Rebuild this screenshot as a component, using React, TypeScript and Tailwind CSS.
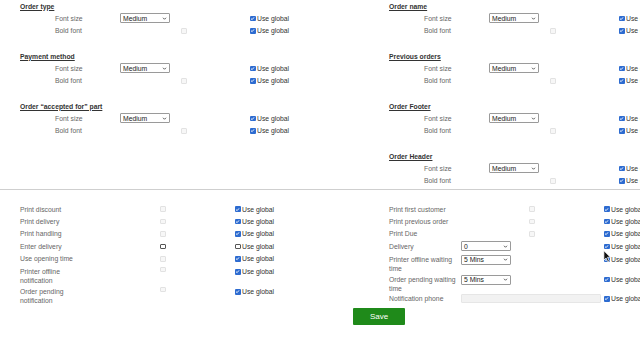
import React from "react";

type Top = { title: string };

const TOP_LEFT: Top[] = [
  { title: "Order type" },
  { title: "Payment method" },
  { title: "Order \u201caccepted for\u201d part" },
];

const TOP_RIGHT: Top[] = [
  { title: "Order name" },
  { title: "Previous orders" },
  { title: "Order Footer" },
  { title: "Order Header" },
];

type Bottom = {
  label: string;
  select?: string;
  input?: boolean;
  box?: "disabled" | "empty" | "none";
  global: boolean;
  tall?: boolean;
};

const BOTTOM_LEFT: Bottom[] = [
  { label: "Print discount", box: "disabled", global: true },
  { label: "Print delivery", box: "disabled", global: true },
  { label: "Print handling", box: "disabled", global: true },
  { label: "Enter delivery", box: "empty", global: false },
  { label: "Use opening time", box: "disabled", global: true },
  { label: "Printer offline notification", box: "disabled", global: true, tall: true },
  { label: "Order pending notification", box: "disabled", global: true, tall: true },
];

const BOTTOM_RIGHT: Bottom[] = [
  { label: "Print first customer", box: "disabled", global: true },
  { label: "Print previous order", box: "disabled", global: true },
  { label: "Print Due", box: "disabled", global: true },
  { label: "Delivery", select: "0", box: "none", global: true },
  { label: "Printer offline waiting time", select: "5 Mins", box: "none", global: true, tall: true },
  { label: "Order pending waiting time", select: "5 Mins", box: "none", global: true, tall: true },
  { label: "Notification phone", input: true, box: "none", global: true },
];

function Check({ checked }: { checked: boolean }) {
  if (!checked)
    return <span className="w-[5.5px] h-[5.5px] border border-[#555] bg-white rounded-[1px] shrink-0" />;
  return (
    <span className="w-[5.5px] h-[5.5px] bg-[#2d6bd0] rounded-[1px] shrink-0 flex items-center justify-center">
      <svg viewBox="0 0 10 10" className="w-[5px] h-[5px]">
        <path d="M2 5.2 L4.2 7.3 L8 2.8" fill="none" stroke="#fff" strokeWidth="1.8" />
      </svg>
    </span>
  );
}

function Disabled() {
  return <span className="w-[5.5px] h-[5.5px] border border-[#e2e2e2] bg-[#f7f7f7] rounded-[1px]" />;
}

function Select({ value }: { value: string }) {
  return (
    <div className="w-[50px] h-[10px] border border-[#9a9a9a] rounded-[1px] flex items-center justify-between px-[2px] text-[#222] bg-white">
      <span>{value}</span>
      <svg viewBox="0 0 10 10" className="w-[5px] h-[5px]">
        <path d="M2 3.5 L5 6.5 L8 3.5" fill="none" stroke="#333" strokeWidth="1.6" />
      </svg>
    </div>
  );
}

function UseGlobal({ checked }: { checked: boolean }) {
  return (
    <div className="flex items-center gap-[1.5px] text-[#333] whitespace-nowrap">
      <Check checked={checked} />
      <span>Use global</span>
    </div>
  );
}

function TopSection({ title }: Top) {
  return (
    <div className="mb-[13px]">
      <div className="h-[12px] flex items-center font-bold underline text-[#333]">{title}</div>
      <div className="h-[12.5px] flex items-center pl-[35px]">
        <span className="w-[65px] text-[#666]">Font size</span>
        <div className="w-[61px]">
          <Select value="Medium" />
        </div>
        <div className="w-[69px]" />
        <UseGlobal checked />
      </div>
      <div className="h-[12.5px] flex items-center pl-[35px]">
        <span className="w-[65px] text-[#666]">Bold font</span>
        <div className="w-[61px]" />
        <div className="w-[69px] flex">
          <Disabled />
        </div>
        <UseGlobal checked />
      </div>
    </div>
  );
}

function BottomRow({ row }: { row: Bottom }) {
  return (
    <div className={`flex ${row.tall ? "h-[20px] items-start pt-[2px]" : "h-[12.4px] items-center"}`}>
      <span className={`w-[72px] text-[#666] ${row.tall ? "leading-[9px] pr-[2px]" : ""}`}>{row.label}</span>
      {row.input ? (
        <div className="w-[143px] flex">
          <div className="w-[140px] h-[9px] bg-[#f2f2f2] border border-[#e6e6e6] rounded-[1px]" />
        </div>
      ) : (
        <>
          <div className="w-[68px]">{row.select && <Select value={row.select} />}</div>
          <div className="w-[75px] flex">
            {row.box === "disabled" && <Disabled />}
            {row.box === "empty" && <Check checked={false} />}
          </div>
        </>
      )}
      <div className={row.tall ? "pt-[0.5px]" : ""}>
        <UseGlobal checked={row.global} />
      </div>
    </div>
  );
}

export default function App() {
  return (
    <div
      className="relative w-[640px] h-[360px] overflow-hidden bg-white text-[6.8px] leading-[9px]"
      style={{ fontFamily: "'Liberation Sans', Arial, sans-serif" }}
    >
      <div className="w-[758px]">
        {/* top font settings */}
        <div className="flex pl-[20px] h-[190px] border-b border-[#cfcfcf]">
          <div className="w-[369px]">
            {TOP_LEFT.map((s) => (
              <TopSection key={s.title} {...s} />
            ))}
          </div>
          <div className="flex-1">
            {TOP_RIGHT.map((s) => (
              <TopSection key={s.title} {...s} />
            ))}
          </div>
        </div>

        {/* print options */}
        <div className="flex pl-[20px] pt-[13px]">
          <div className="w-[369px]">
            {BOTTOM_LEFT.map((r) => (
              <BottomRow key={r.label} row={r} />
            ))}
          </div>
          <div className="flex-1">
            {BOTTOM_RIGHT.map((r) => (
              <BottomRow key={r.label} row={r} />
            ))}
          </div>
        </div>

        <div className="flex justify-center mt-[3px]">
          <button className="w-[52px] h-[17px] bg-[#1f8a1a] text-white text-[8px] rounded-[1px]">Save</button>
        </div>
      </div>

      {/* mouse pointer */}
      <svg viewBox="0 0 12 18" className="absolute left-[603px] top-[250px] w-[9px] h-[13px]">
        <path d="M1 1 L1 14 L4 11 L6.5 16.5 L8.5 15.5 L6 10 L10 10 Z" fill="#111" stroke="#fff" strokeWidth="1" />
      </svg>
    </div>
  );
}
